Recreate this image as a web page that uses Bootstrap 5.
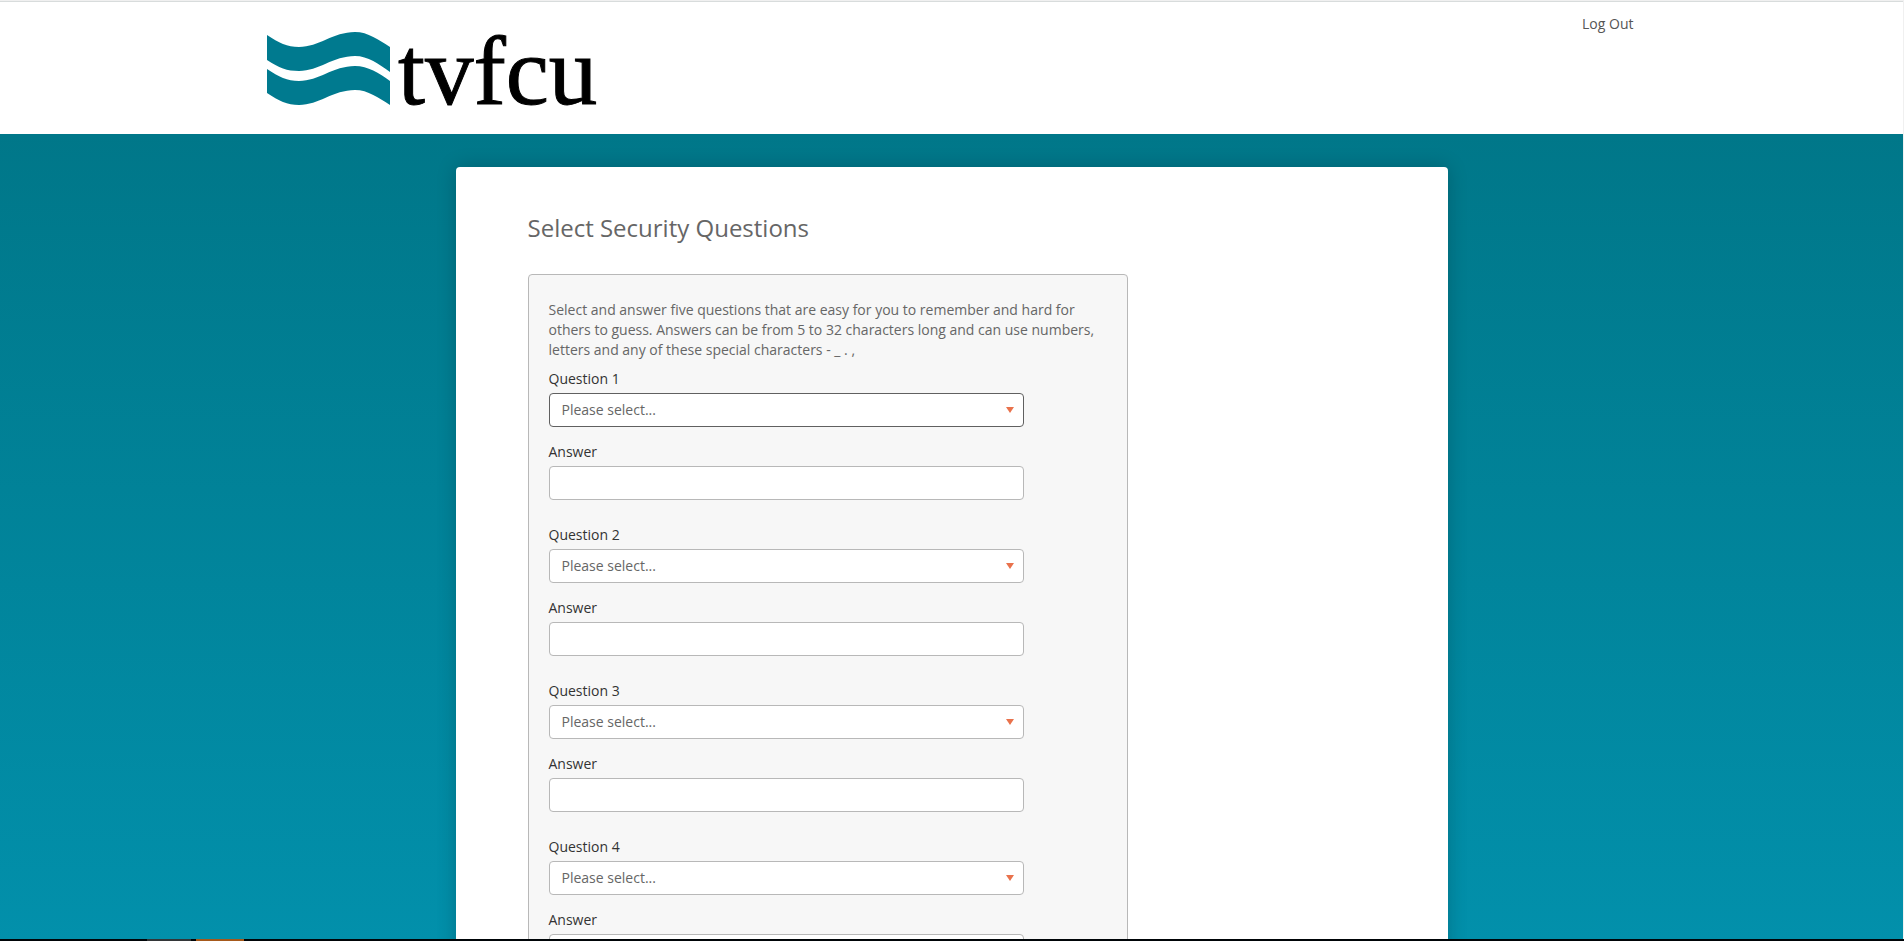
<!DOCTYPE html>
<html lang="en">
<head>
<meta charset="utf-8">
<meta name="viewport" content="width=device-width, initial-scale=1">
<title>Select Security Questions</title>
<link rel="stylesheet" href="https://cdn.jsdelivr.net/npm/bootstrap@5.3.0/dist/css/bootstrap.min.css">
<style>
body { font-family: "Open Sans", "Noto Sans", sans-serif; font-size: 14px; line-height: 20px; color: #666; background: #f0f0f0; }
.scroll-area { overflow-y: auto; scrollbar-width: none; border-top: 1px solid #d8dcdc; margin-top: 1px; margin-right: 1px; min-height: 0; }
.scroll-area::-webkit-scrollbar { display: none; }
.site-header { background: #fff; padding: 12px 16px 4px; }
.header-inner { max-width: 1370px; padding-right: 3px; }
.brand-art { display: block; width: 340px; height: 116px; max-width: 100%; }
.logout-link { color: #555; }
.backdrop { background: linear-gradient(#007789, #0290ab 805px, #0290ab); padding: 33px 16px; }
.panel { max-width: 992px; background: #fff; border-radius: 4px; padding: 46px 72px 72px; box-shadow: 0 0 20px rgba(0, 0, 0, .2); }
.panel-title { font-size: 24px; line-height: 30px; font-weight: 400; color: #666; margin: 0 0 31px; }
.question-box { max-width: 600px; background: #f7f7f7; border: 1px solid #b8b8b8; border-radius: 4px; padding: 25px 20px 40px; }
.field-label { display: block; color: #333; margin-bottom: 4px; }
.field-control.form-select, .field-control.form-control { max-width: 475px; height: 34px; padding: 6px 12px; font-size: 14px; line-height: 20px; color: #666; background-color: #fff; border: 1px solid #b8b8b8; border-radius: 4px; box-shadow: none; }
.field-control.form-select { background-image: url("data:image/svg+xml,%3Csvg xmlns='http://www.w3.org/2000/svg' viewBox='0 0 8 6'%3E%3Cpath d='M0 0h8L4 6z' fill='%23e9724c'/%3E%3C/svg%3E"); background-size: 8px 6px; background-position: right 9px center; margin-bottom: 15px; }
.field-control.form-select.is-current { border-color: #606060; }
.question-list { gap: 25px; margin-top: 9px; }
.taskbar-edge { height: 2px; background: #000508; flex: none; padding-left: 147px; gap: 5px; }
.task-idle { width: 44px; background: #333638; }
.task-active { width: 48px; background: #a6591b; }
</style>
</head>
<body class="d-flex flex-column vh-100 overflow-hidden">
<div class="scroll-area flex-grow-1">
  <header class="site-header">
    <div class="header-inner mx-auto d-flex justify-content-between align-items-start">
      <a href="#" aria-label="tvfcu home">
        <svg class="brand-art" viewBox="0 0 340 116">
          <g fill="#007a8f">
            <path d="M0 21C12 29 20 33 32 33C52 33 66 18 88 18C101 18 112 26 123 33V58C112 50 101 42 88 42C66 42 52 57 32 57C20 57 12 54 0 46Z"/>
            <path d="M0 55C12 63 20 67 32 67C52 67 66 52 88 52C101 52 112 59 123 67V91C112 84 101 76 88 76C66 76 52 91 32 91C20 91 12 87 0 79Z"/>
          </g>
          <text x="131" y="90" font-family="Liberation Serif, serif" font-size="97" fill="#000" stroke="#000" stroke-width="1">tvfcu</text>
        </svg>
      </a>
      <a href="#" class="logout-link text-decoration-none">Log Out</a>
    </div>
  </header>
  <main class="backdrop">
    <div class="panel mx-auto">
      <h1 class="panel-title">Select Security Questions</h1>
      <form class="question-box">
        <p class="m-0">Select and answer five questions that are easy for you to remember and hard for others to guess. Answers can be from 5 to 32 characters long and can use numbers, letters and any of these special characters - _ . ,</p>
        <div class="question-list d-flex flex-column">
          <div>
            <label class="field-label" for="q1">Question 1</label>
            <select class="form-select field-control is-current" id="q1"><option>Please select...</option></select>
            <label class="field-label" for="a1">Answer</label>
            <input class="form-control field-control" type="text" id="a1">
          </div>
          <div>
            <label class="field-label" for="q2">Question 2</label>
            <select class="form-select field-control" id="q2"><option>Please select...</option></select>
            <label class="field-label" for="a2">Answer</label>
            <input class="form-control field-control" type="text" id="a2">
          </div>
          <div>
            <label class="field-label" for="q3">Question 3</label>
            <select class="form-select field-control" id="q3"><option>Please select...</option></select>
            <label class="field-label" for="a3">Answer</label>
            <input class="form-control field-control" type="text" id="a3">
          </div>
          <div>
            <label class="field-label" for="q4">Question 4</label>
            <select class="form-select field-control" id="q4"><option>Please select...</option></select>
            <label class="field-label" for="a4">Answer</label>
            <input class="form-control field-control" type="text" id="a4">
          </div>
        </div>
      </form>
    </div>
  </main>
</div>
<div class="taskbar-edge d-flex"><span class="task-idle"></span><span class="task-active"></span></div>
<script src="https://cdn.jsdelivr.net/npm/bootstrap@5.3.0/dist/js/bootstrap.bundle.min.js"></script>
</body>
</html>
